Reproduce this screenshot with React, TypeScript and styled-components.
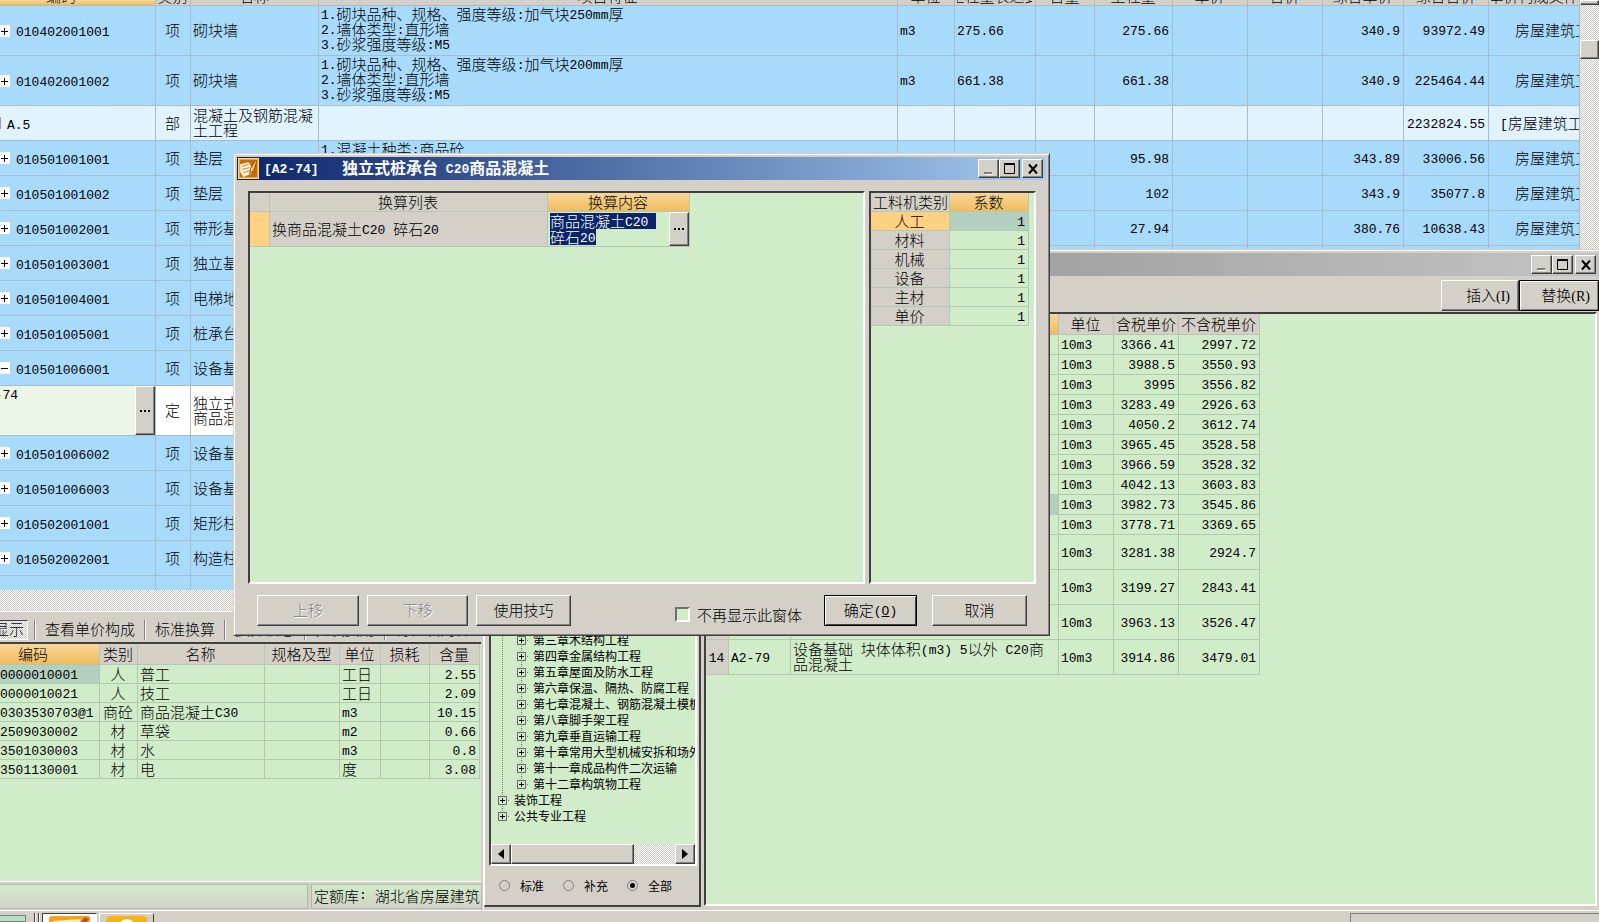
import React from 'react';
import styled, { createGlobalStyle, css } from 'styled-components';

const c = {
  face: '#d4d0c8',
  green: '#d0ecc9',
  greenLine: '#b2c8b0',
  teal: '#b3cfbf',
  blue: '#a8dbfb',
  blueLine: '#a9bccb',
  section: '#e0f3fe',
  navy: '#0a246a',
  dark: '#404040',
  shadow: '#808080',
};
const gold = 'linear-gradient(#f8d79a, #f0bc5c)';
const hatch = 'repeating-conic-gradient(#fff 0 25%, #d0ccc4 0 50%) 0 0 / 2px 2px';

const Global = createGlobalStyle`
  * { box-sizing: border-box; }
  html, body { margin: 0; padding: 0; overflow: hidden; }
  body {
    font-family: "Noto Sans CJK SC", "Liberation Sans", sans-serif;
    font-size: 15px; line-height: 15px; font-weight: 300; color: #000; background: ${c.face};
  }
  button, input { font: inherit; color: inherit; margin: 0; }
`;

const Latin = styled.span`
  font-family: "Liberation Mono", monospace;
  font-size: 13px;
  line-height: 0;
  vertical-align: 1px;
`;

/* Half-width characters use the monospaced face, everything else the CJK one. */
const T = ({ children }: { children: string }) => (
  <>
    {children.split(/([\x20-\x7e]+)/).map((p, i) => (i % 2 ? <Latin key={i}>{p}</Latin> : p))}
  </>
);

const raised = css`
  background: ${c.face};
  border: 1px solid;
  border-color: #fff ${c.dark} ${c.dark} #fff;
  box-shadow: inset -1px -1px ${c.shadow};
`;
const sunken = css`
  border: 2px solid;
  border-color: ${c.dark} #fff #fff ${c.dark};
`;

const Desktop = styled.div`
  position: relative;
  display: flex;
  flex-direction: column;
  height: 100vh;
  overflow: hidden;
`;

/* ---------- data grids ---------- */
const Grid = styled.table<{ $fill?: boolean; $line: string; $pad?: number }>`
  width: ${(p) => (p.$fill ? '100%' : '0')};
  table-layout: fixed;
  border-collapse: separate;
  border-spacing: 0;
  th, td {
    font-weight: 300;
    padding: 0 ${(p) => p.$pad ?? 3}px 2px 2px;
    border: 0 solid ${(p) => p.$line};
    border-width: 0 1px 1px 0;
    overflow: hidden;
  }
`;
const Row = styled.tr<{ $h: number; $bg?: string }>`
  height: ${(p) => p.$h}px;
  background: ${(p) => p.$bg ?? 'transparent'};
`;
const Head = styled.th<{ $gold?: boolean }>`
  background: ${(p) => (p.$gold ? gold : c.face)};
  white-space: nowrap;
`;
const Cell = styled.td<{ $align?: string; $bg?: string; $nowrap?: boolean; $top?: boolean; $flush?: boolean }>`
  text-align: ${(p) => p.$align ?? 'left'};
  background: ${(p) => p.$bg ?? 'transparent'};
  white-space: ${(p) => (p.$nowrap ? 'nowrap' : 'pre-line')};
  vertical-align: ${(p) => (p.$top ? 'top' : 'middle')};
  ${(p) => p.$flush && css`&& { padding: 0; }`}
`;
const Cols = ({ w }: { w: (number | undefined)[] }) => (
  <colgroup>{w.map((x, i) => <col key={i} style={x ? { width: x } : undefined} />)}</colgroup>
);
const CodeHead = styled.div`
  padding-right: 32px;
`;

/* ---------- bill of quantities ---------- */
const BillArea = styled.section`
  display: flex;
  flex: none;
  height: 590px;
  overflow: hidden;
`;
const BillBody = styled.div`
  flex: 1;
  min-width: 0;
  background: ${c.blue};
`;
const BillHead = styled(Head)`
  && { padding-bottom: 0; }
`;
const HeadClip = styled.div`
  display: flex;
  align-items: flex-end;
  justify-content: center;
  height: 5px;
  padding-bottom: 2px;
  overflow: hidden;
`;
const CodeCell = styled.div`
  display: flex;
  align-items: center;
  gap: 6px;
`;
const Toggle = styled.button`
  display: flex;
  align-items: center;
  width: 10px;
  height: 12px;
  padding: 0;
  border: 0;
  background: #fff;
`;
const SectionMark = styled.span`
  width: 1px;
  height: 12px;
  background: #a0a0a0;
`;
const EditCell = styled.div`
  display: flex;
  justify-content: space-between;
  height: 49px;
  background: #ebf6e6;
`;
const CutCode = styled.span`
  display: flex;
  justify-content: flex-end;
  width: 18px;
  height: 20px;
  padding-top: 2px;
  white-space: nowrap;
  line-height: 16px;
  overflow: hidden;
  ${Latin} { line-height: 16px; }
`;
const Dots = styled.button<{ $h: number }>`
  ${raised}
  flex: none;
  width: 20px;
  height: ${(p) => p.$h}px;
  padding: 0;
  display: flex;
  align-items: center;
  justify-content: center;
  gap: 2px;
  i { width: 2px; height: 2px; background: #000; }
`;
const VScroll = styled.div`
  width: 19px;
  background: ${hatch};
`;
const ScrollPart = styled.div<{ $h?: number; $w?: number; $gap?: number }>`
  ${raised}
  height: ${(p) => p.$h ?? 20}px;
  width: ${(p) => (p.$w ? p.$w + 'px' : 'auto')};
  margin-top: ${(p) => p.$gap ?? 0}px;
`;
const HatchBar = styled.div`
  flex: none;
  height: 22px;
  background: ${hatch};
  border-bottom: 1px solid #fff;
`;
const FileName = styled.span<{ $part?: boolean }>`
  padding-left: ${(p) => (p.$part ? 9 : 24)}px;
`;

type Bill = { code: string; name: string; h?: number; feat?: string; unit?: string; expr?: string; qty?: string; price?: string; total?: string; open?: boolean };
const bills: Bill[] = [
  { code: '010402001001', name: '砌块墙', h: 50, feat: '1.砌块品种、规格、强度等级:加气块250mm厚\n2.墙体类型:直形墙\n3.砂浆强度等级:M5', unit: 'm3', expr: '275.66', qty: '275.66', price: '340.9', total: '93972.49' },
  { code: '010402001002', name: '砌块墙', h: 50, feat: '1.砌块品种、规格、强度等级:加气块200mm厚\n2.墙体类型:直形墙\n3.砂浆强度等级:M5', unit: 'm3', expr: '661.38', qty: '661.38', price: '340.9', total: '225464.44' },
  { code: 'A.5', name: '混凝土及钢筋混凝土工程', total: '2232824.55' },
  { code: '010501001001', name: '垫层', feat: '1.混凝土种类:商品砼', qty: '95.98', price: '343.89', total: '33006.56' },
  { code: '010501001002', name: '垫层', qty: '102', price: '343.9', total: '35077.8' },
  { code: '010501002001', name: '带形基础', qty: '27.94', price: '380.76', total: '10638.43' },
  { code: '010501003001', name: '独立基础' },
  { code: '010501004001', name: '电梯地坑' },
  { code: '010501005001', name: '桩承台基础' },
  { code: '010501006001', name: '设备基础', open: true },
  { code: 'A2-74', name: '独立式桩承台 C20商品混凝土', h: 50 },
  { code: '010501006002', name: '设备基础' },
  { code: '010501006003', name: '设备基础' },
  { code: '010502001001', name: '矩形柱' },
  { code: '010502002001', name: '构造柱' },
  { code: '', name: '' },
];

const BillTable = () => (
  <Grid $fill $line={c.blueLine}>
    <Cols w={[156, 35, 128, 579, 57, 81, 59, 78, 75, 75, 81, 85, undefined]} />
    <thead>
      <Row $h={6}>
        {['编码', '类别', '名称', '项目特征', '单位', '工程量表达式', '含量', '工程量', '单价', '合价', '综合单价', '综合合价', '单价构成文件'].map((h, i) => (
          <BillHead key={h} $gold={i === 0}><HeadClip>{i ? h : <CodeHead>{h}</CodeHead>}</HeadClip></BillHead>
        ))}
      </Row>
    </thead>
    <tbody>
      {bills.map((b, i) => {
        const part = b.code === 'A.5';
        const norm = b.code === 'A2-74';
        return (
          <Row key={i} $h={b.h ?? 35} $bg={part ? c.section : norm ? '#fff' : c.blue}>
            <Cell $flush>
              {norm ? (
                <EditCell>
                  <CutCode><T>{b.code}</T></CutCode>
                  <Dots $h={49} aria-label="选择"><i /><i /><i /></Dots>
                </EditCell>
              ) : b.code && (
                <CodeCell>
                  {part ? <SectionMark /> : (
                    <Toggle aria-label="展开">
                      <svg width="10" height="12"><path d={b.open ? 'M1 6.5h7' : 'M1 6.5h7M4.5 3v7'} stroke="#000" /></svg>
                    </Toggle>
                  )}
                  <span><T>{b.code}</T></span>
                </CodeCell>
              )}
            </Cell>
            <Cell $align="center">{b.code && (part ? '部' : norm ? '定' : '项')}</Cell>
            <Cell><T>{b.name}</T></Cell>
            <Cell $top><T>{b.feat ?? ''}</T></Cell>
            <Cell><T>{b.unit ?? ''}</T></Cell>
            <Cell><T>{b.expr ?? ''}</T></Cell>
            <Cell />
            <Cell $align="right"><T>{b.qty ?? ''}</T></Cell>
            <Cell />
            <Cell />
            <Cell $align="right"><T>{b.price ?? ''}</T></Cell>
            <Cell $align="right"><T>{b.total ?? ''}</T></Cell>
            <Cell $nowrap>
              <FileName $part={part}><T>{!b.total ? '' : part ? '[房屋建筑工程]' : '房屋建筑工程'}</T></FileName>
            </Cell>
          </Row>
        );
      })}
    </tbody>
  </Grid>
);

/* ---------- lower left ---------- */
const Lower = styled.section`
  flex: 1;
  min-height: 0;
  width: 482px;
  display: flex;
  flex-direction: column;
`;
const TabStrip = styled.div`
  display: flex;
  flex: none;
  align-items: center;
  height: 30px;
  padding-top: 5px;
  overflow: hidden;
`;
const Tab = styled.button<{ $on?: boolean }>`
  flex: none;
  height: 20px;
  padding: 0 10px 2px 9px;
  border: 0;
  background: none;
  line-height: 15px;
  border-left: 1px solid #fff;
  box-shadow: -1px 0 ${c.shadow};
  white-space: nowrap;
  ${(p) => p.$on && css`
    display: flex;
    justify-content: flex-end;
    width: 28px;
    margin-right: 7px;
    padding: 0 3px 0 0;
    overflow: hidden;
    background: ${hatch};
    border: 1px solid;
    border-color: ${c.dark} #fff #fff ${c.dark};
    border-left: 0;
    box-shadow: none;
  `}
`;
const LowerPanel = styled.div`
  flex: 1;
  min-height: 0;
  margin-right: 1px;
  background: ${c.green};
  border-top: 2px solid ${c.dark};
  border-bottom: 1px solid #fff;
`;
const StatusBar = styled.footer`
  display: flex;
  gap: 3px;
  flex: none;
  height: 28px;
  padding-top: 2px;
  border-bottom: 1px solid ${c.face};
`;
const StatusPart = styled.div<{ $w?: number }>`
  width: ${(p) => (p.$w ? p.$w + 'px' : 'auto')};
  flex: ${(p) => (p.$w ? 'none' : 1)};
  display: flex;
  align-items: center;
  padding: 0 0 2px 2px;
  border: 1px solid #b4b8ac;
  border-left-width: ${(p) => (p.$w ? 0 : 1)}px;
  background: linear-gradient(${c.green}, #d3d2c8);
  white-space: pre;
  overflow: hidden;
`;
const materials = [
  ['0000010001', '人', '普工', '工日', '2.55'],
  ['0000010021', '人', '技工', '工日', '2.09'],
  ['0303530703@1', '商砼', '商品混凝土C30', 'm3', '10.15'],
  ['2509030002', '材', '草袋', 'm2', '0.66'],
  ['3501030003', '材', '水', 'm3', '0.8'],
  ['3501130001', '材', '电', '度', '3.08'],
];
const Flush = styled.div`
  padding-bottom: 2px;
`;

/* ---------- task bar ---------- */
const TaskBar = styled.nav`
  display: flex;
  flex: none;
  gap: 2px;
  height: 12px;
  padding-top: 2px;
  border-top: 1px solid #fff;
  overflow: hidden;
`;
const TaskButton = styled.button<{ $on?: boolean }>`
  flex: none;
  width: 55px;
  height: 24px;
  padding: 2px 6px;
  display: flex;
  border: 1px solid;
  border-color: ${(p) => (p.$on ? `${c.dark} #fff #fff ${c.dark}` : `#fff ${c.dark} ${c.dark} #fff`)};
  background: ${(p) => (p.$on ? '#fff' : c.face)};
`;
const QuickItem = styled.div`
  width: 26px;
  margin: 2px 6px 0 0;
  border: 1px solid ${c.shadow};
  border-left: 0;
  background: #b5e0c0;
`;
const Grip = styled.div`
  width: 2px;
  background: ${c.dark};
  border-right: 1px solid #fff;
`;
const Tray = styled.div`
  width: 249px;
  margin-left: auto;
  border-top: 1px solid ${c.shadow};
  border-left: 1px solid ${c.shadow};
`;

/* ---------- windows ---------- */
const Window = styled.section`
  position: absolute;
  display: flex;
  flex-direction: column;
  background: ${c.face};
  border: 1px solid ${c.face};
`;
const QueryWindow = styled(Window)`
  top: 249px;
  left: 482px;
  right: 0;
  bottom: 12px;
  border-right: 0;
  box-shadow: inset 1px 1px #fff;
  padding-top: 3px;
`;
const Dialog = styled(Window)`
  top: 153px;
  left: 233px;
  width: 817px;
  height: 483px;
  border-color: ${c.face} ${c.dark} ${c.dark} ${c.face};
  box-shadow: inset 1px 1px #fff, inset -1px -1px ${c.shadow};
  padding: 3px 3px 0;
`;
const TitleBar = styled.header<{ $active?: boolean }>`
  display: flex;
  flex: none;
  align-items: center;
  height: 23px;
  padding: 0 3px 0 1px;
  color: #fff;
  background: ${(p) => (p.$active ? `linear-gradient(90deg, ${c.navy}, #a6caf0)` : 'linear-gradient(90deg, #808080, #c4c4c4)')};
`;
const Title = styled.h1`
  flex: 1;
  margin: 0;
  padding: 0 0 3px 5px;
  font-size: 16px;
  line-height: 20px;
  font-weight: 700;
  white-space: pre;
`;
const WinButton = styled.button<{ $gap?: boolean }>`
  ${raised}
  width: 21px;
  height: 19px;
  padding: 0;
  display: flex;
  align-items: center;
  justify-content: center;
  margin-left: ${(p) => (p.$gap ? 2 : 0)}px;
`;
const WinButtons = () => (
  <>
    <WinButton aria-label="最小化"><svg width="16" height="14"><path d="M3 11h8" stroke="#808080" strokeWidth="2" /><path d="M4 12.5h8" stroke="#fff" /></svg></WinButton>
    <WinButton aria-label="最大化"><svg width="14" height="14"><path d="M1.500 2.500h10v9h-10zM1 1.500h11" fill="none" stroke="#000" /></svg></WinButton>
    <WinButton aria-label="关闭" $gap><svg width="14" height="14"><path d="M3 2.500l8 9M11 2.500l-8 9" stroke="#000" strokeWidth="2" /></svg></WinButton>
  </>
);
const NoteIcon = ({ size }: { size: number }) => (
  <svg width={size} height={size} viewBox="0 0 20 20">
    <rect x=".5" y=".5" width="19" height="19" fill="#f0a028" stroke="#ffd98a" />
    <rect x="2" y="2" width="16" height="16" fill="#c06c10" />
    <path d="M2 6l8-2 2 3 1 8-8 3-3-5z" fill="#fff3d8" />
    <path d="M4 8l6-2M4 11l7-2M5 14l6-2" stroke="#d8883c" />
    <path d="M17 2l-5 8-1 5 4-3 3-9z" fill="#ffd050" stroke="#8a3c08" strokeWidth=".8" />
  </svg>
);

/* query window parts */
const QueryBody = styled.div`
  display: flex;
  flex: 1;
  min-height: 0;
  padding: 0 0 2px 1px;
`;
const TreePanel = styled.aside`
  display: flex;
  flex-direction: column;
  flex: none;
  width: 217px;
  margin-right: 3px;
  padding: 0 2px 0 4px;
  border: solid;
  border-width: 0 2px 2px 1px;
  border-color: #fff ${c.dark} ${c.dark} #fff;
`;
const TreeBox = styled.div`
  ${sunken}
  display: flex;
  flex-direction: column;
  flex: 1;
  min-height: 0;
  background: ${c.green};
  font-size: 12px;
  line-height: 16px;
  font-weight: 400;
`;
const Tree = styled.ul`
  display: flex;
  flex-direction: column;
  justify-content: flex-end;
  flex: 1;
  min-height: 0;
  margin: 0;
  padding: 0 0 20px 7px;
  list-style: none;
  overflow: hidden;
`;
const dotV = 'repeating-linear-gradient(#777 0 1px, transparent 1px 2px) 4px 0 / 1px';
const SubTree = styled.ul`
  margin: 0;
  padding: 0 0 0 19px;
  list-style: none;
  background: ${dotV} 100% no-repeat;
`;
const Leaf = styled.li<{ $last?: boolean }>`
  display: flex;
  align-items: center;
  height: 16px;
  white-space: nowrap;
  background: ${dotV} ${(p) => (p.$last ? '50%' : '100%')} no-repeat;
`;
const LeafMark = styled.button`
  display: flex;
  flex: none;
  width: 12px;
  height: 9px;
  margin-right: 4px;
  padding: 0;
  border: 0;
  background: none;
`;
const TreeItem = ({ text, last }: { text: string; last?: boolean }) => (
  <Leaf $last={last}>
    <LeafMark aria-label="展开">
      <svg width="12" height="9">
        <path d="M.5.5h8v8h-8z" fill={c.green} stroke="#666" />
        <path d="M2 4.500h5M4.500 2v5" stroke="#000" />
        <path d="M10 4.500h1" stroke="#777" />
      </svg>
    </LeafMark>
    {text}
  </Leaf>
);
const HScroll = styled.div`
  display: flex;
  flex: none;
  height: 20px;
  background: ${hatch};
`;
const Arrow = styled.button<{ $end?: boolean }>`
  ${raised}
  width: 20px;
  padding: 0;
  margin-left: ${(p) => (p.$end ? 'auto' : 0)};
  display: flex;
  align-items: center;
  justify-content: center;
`;
const RadioRow = styled.div`
  display: flex;
  flex: none;
  align-items: center;
  gap: 19px;
  height: 39px;
  padding-left: 10px;
  font-size: 12px;
  font-weight: 400;
  label { display: flex; align-items: center; gap: 10px; }
  input {
    appearance: none;
    width: 11px;
    height: 11px;
    border: 1px solid ${c.shadow};
    border-radius: 50%;
  }
  input:checked { background: radial-gradient(#000 0 2px, transparent 3px); }
`;
const NormColumn = styled.div`
  display: flex;
  flex-direction: column;
  flex: 1;
  min-width: 0;
`;
const Toolbar = styled.div`
  display: flex;
  flex: none;
  justify-content: flex-end;
  height: 36px;
  padding-top: 4px;
`;
const ToolButton = styled.button<{ $default?: boolean }>`
  ${raised}
  width: ${(p) => (p.$default ? 80 : 78)}px;
  height: 31px;
  padding: 0 8px 0 0;
  text-align: right;
  ${(p) => p.$default && css`border-color: #000; box-shadow: inset 1px 1px #fff, inset -1px -1px ${c.shadow};`}
  span { font-family: "Liberation Serif", serif; font-size: 14px; }
`;
const NormPanel = styled.div`
  ${sunken}
  flex: 1;
  min-height: 0;
  margin-right: 2px;
  margin-bottom: 1px;
  background: ${c.green};
`;
const prices = [
  ['3366.41', '2997.72'], ['3988.5', '3550.93'], ['3995', '3556.82'], ['3283.49', '2926.63'], ['4050.2', '3612.74'],
  ['3965.45', '3528.58'], ['3966.59', '3528.32'], ['4042.13', '3603.83'], ['3982.73', '3545.86'], ['3778.71', '3369.65'],
  ['3281.38', '2924.7'], ['3199.27', '2843.41'], ['3963.13', '3526.47'], ['3914.86', '3479.01'],
];

/* dialog parts */
const DialogBody = styled.div`
  display: flex;
  flex: 1;
  min-height: 0;
  gap: 4px;
  margin: 11px 10px 0 11px;
`;
const Pane = styled.div<{ $w?: number }>`
  ${sunken}
  flex: ${(p) => (p.$w ? 'none' : 1)};
  width: ${(p) => (p.$w ? p.$w + 'px' : 'auto')};
  background: ${c.green};
`;
const Editing = styled.div`
  display: flex;
  justify-content: space-between;
  padding-left: 2px;
`;
const Picked = styled.div`
  display: flex;
  flex-direction: column;
  align-items: flex-start;
  justify-content: center;
  span { white-space: pre; }
  > span { background: ${c.navy}; color: #fff; height: 16px; }
`;
const DialogFooter = styled.footer`
  display: flex;
  flex: none;
  align-items: center;
  height: 51px;
  padding: 2px 19px 0 20px;
  gap: 8px;
`;
const PushButton = styled.button<{ $w: number; $default?: boolean; $gap?: number }>`
  ${raised}
  width: ${(p) => p.$w}px;
  height: 31px;
  padding: 0 0 2px;
  margin-left: ${(p) => p.$gap ?? 0}px;
  ${(p) => p.$default && css`border-color: #000; box-shadow: inset 1px 1px #fff, inset -1px -1px ${c.dark};`}
  &:disabled { color: ${c.shadow}; text-shadow: 1px 1px #fff; }
`;
const Check = styled.label`
  display: flex;
  align-items: center;
  gap: 7px;
  margin-left: auto;
  padding-top: 8px;
  input {
    appearance: none;
    width: 15px;
    height: 15px;
    border: 2px solid;
    border-color: #707070 #fff #fff #707070;
    background: ${c.green};
  }
`;
const factors = ['人工', '材料', '机械', '设备', '主材', '单价'];

export default function App() {
  return (
    <Desktop>
      <Global />
      <BillArea>
        <BillBody><BillTable /></BillBody>
        <VScroll><ScrollPart $h={5} /><ScrollPart $gap={35} $h={19} /></VScroll>
      </BillArea>
      <HatchBar />
      <Lower>
        <TabStrip>
          <Tab $on>查看显示</Tab>
          <Tab>查看单价构成</Tab>
          <Tab>标准换算</Tab>
          <Tab>换算信息</Tab>
          <Tab>安装费用</Tab>
          <Tab>特征及内容</Tab>
        </TabStrip>
        <LowerPanel>
          <Grid $line={c.greenLine}>
            <Cols w={[100, 38, 127, 75, 41, 49, 50]} />
            <thead>
              <Row $h={21}>
                {['编码', '类别', '名称', '规格及型', '单位', '损耗', '含量'].map((h, i) => (
                  <Head key={h} $gold={!i}>{i ? h : <CodeHead>{h}</CodeHead>}</Head>
                ))}
              </Row>
            </thead>
            <tbody>
              {materials.map((m, i) => (
                <Row key={m[0]} $h={19}>
                  <Cell $nowrap $flush $bg={i ? undefined : c.teal}><Flush><T>{m[0]}</T></Flush></Cell>
                  <Cell $align="center" $nowrap>{m[1]}</Cell>
                  <Cell><T>{m[2]}</T></Cell>
                  <Cell />
                  <Cell><T>{m[3]}</T></Cell>
                  <Cell />
                  <Cell $align="right"><T>{m[4]}</T></Cell>
                </Row>
              ))}
            </tbody>
          </Grid>
        </LowerPanel>
        <StatusBar>
          <StatusPart $w={308} />
          <StatusPart><T>定额库: 湖北省房屋建筑-工程</T></StatusPart>
        </StatusBar>
      </Lower>
      <TaskBar>
        <QuickItem />
        <Grip /><Grip />
        <TaskButton $on aria-label="计价软件">
          <svg width="42" height="20"><path d="M0 3q0-3 3-3h36q3 0 3 3v17H0z" fill="#f3a21c" /><path d="M4 5l28-2-6 17H6z" fill="#fff0c4" /><path d="M30 8l6-7 4 2-6 8z" fill="#c8501c" /></svg>
        </TaskButton>
        <TaskButton aria-label="通讯">
          <svg width="42" height="20"><rect width="42" height="30" rx="5" fill="#f9b310" /><circle cx="21" cy="11" r="8" fill="#fff" /></svg>
        </TaskButton>
        <Tray />
      </TaskBar>

      <QueryWindow>
        <TitleBar><Title /><WinButtons /></TitleBar>
        <QueryBody>
          <TreePanel>
            <TreeBox>
              <Tree>
                <li>
                  <SubTree>
                    {['第三章木结构工程', '第四章金属结构工程', '第五章屋面及防水工程', '第六章保温、隔热、防腐工程', '第七章混凝土、钢筋混凝土模板', '第八章脚手架工程', '第九章垂直运输工程', '第十章常用大型机械安拆和场外运输', '第十一章成品构件二次运输', '第十二章构筑物工程'].map((t, i) => (
                      <TreeItem key={t} text={t} last={i === 9} />
                    ))}
                  </SubTree>
                </li>
                <TreeItem text="装饰工程" />
                <TreeItem text="公共专业工程" last />
              </Tree>
              <HScroll>
                <Arrow aria-label="向左"><svg width="6" height="10"><path d="M6 0v10L0 5z" /></svg></Arrow>
                <ScrollPart $w={123} />
                <Arrow $end aria-label="向右"><svg width="6" height="10"><path d="M0 0v10l6-5z" /></svg></Arrow>
              </HScroll>
            </TreeBox>
            <RadioRow role="radiogroup">
              <label><input type="radio" name="scope" />标准</label>
              <label><input type="radio" name="scope" />补充</label>
              <label><input type="radio" name="scope" defaultChecked />全部</label>
            </RadioRow>
          </TreePanel>
          <NormColumn>
            <Toolbar>
              <ToolButton>插入<span>(I)</span></ToolButton>
              <ToolButton $default>替换<span>(R)</span></ToolButton>
            </Toolbar>
            <NormPanel>
              <Grid $line={c.greenLine}>
                <Cols w={[23, 62, 268, 55, 65, 81]} />
                <thead>
                  <Row $h={21}>
                    <Head /><Head /><Head $gold /><Head>单位</Head><Head>含税单价</Head><Head>不含税单价</Head>
                  </Row>
                </thead>
                <tbody>
                  {prices.map((p, i) => (
                    <Row key={i} $h={i < 10 ? 20 : 35}>
                      <Cell $bg={c.face} $align="center" $nowrap><Latin>{i + 1}</Latin></Cell>
                      <Cell><T>{i === 13 ? 'A2-79' : ''}</T></Cell>
                      <Cell $bg={i === 8 ? c.teal : undefined}><T>{i === 13 ? '设备基础 块体体积(m3) 5以外 C20商品混凝土' : ''}</T></Cell>
                      <Cell><T>10m3</T></Cell>
                      <Cell $align="right"><T>{p[0]}</T></Cell>
                      <Cell $align="right"><T>{p[1]}</T></Cell>
                    </Row>
                  ))}
                </tbody>
              </Grid>
            </NormPanel>
          </NormColumn>
        </QueryBody>
      </QueryWindow>

      <Dialog role="dialog">
        <TitleBar $active>
          <NoteIcon size={21} />
          <Title><T>[A2-74]   独立式桩承台 C20商品混凝土</T></Title>
          <WinButtons />
        </TitleBar>
        <DialogBody>
          <Pane>
            <Grid $line={c.greenLine}>
              <Cols w={[20, 278, 142]} />
              <thead><Row $h={19}><Head /><Head>换算列表</Head><Head $gold>换算内容</Head></Row></thead>
              <tbody>
                <Row $h={35}>
                  <Cell $bg="#ffd183" />
                  <Cell $bg={c.face}><T>换商品混凝土C20 碎石20</T></Cell>
                  <Cell $flush>
                    <Editing>
                      <Picked>
                        <span><T>商品混凝土C20 </T></span>
                        <span><T>碎石20</T></span>
                      </Picked>
                      <Dots $h={34} aria-label="选择"><i /><i /><i /></Dots>
                    </Editing>
                  </Cell>
                </Row>
              </tbody>
            </Grid>
          </Pane>
          <Pane $w={167}>
            <Grid $line={c.greenLine}>
              <Cols w={[79, 79]} />
              <thead><Row $h={19}><Head>工料机类别</Head><Head $gold>系数</Head></Row></thead>
              <tbody>
                {factors.map((f, i) => (
                  <Row key={f} $h={19}>
                    <Cell $align="center" $bg={i ? c.face : '#ffd183'}>{f}</Cell>
                    <Cell $align="right" $bg={i ? undefined : c.teal}><T>1</T></Cell>
                  </Row>
                ))}
              </tbody>
            </Grid>
          </Pane>
        </DialogBody>
        <DialogFooter>
          <PushButton $w={102} disabled>上移</PushButton>
          <PushButton $w={101} disabled>下移</PushButton>
          <PushButton $w={95}>使用技巧</PushButton>
          <Check><input type="checkbox" />不再显示此窗体</Check>
          <PushButton $w={93} $default $gap={14}>确定<Latin>(<u>O</u>)</Latin></PushButton>
          <PushButton $w={95} $gap={7}>取消</PushButton>
        </DialogFooter>
      </Dialog>
    </Desktop>
  );
}
